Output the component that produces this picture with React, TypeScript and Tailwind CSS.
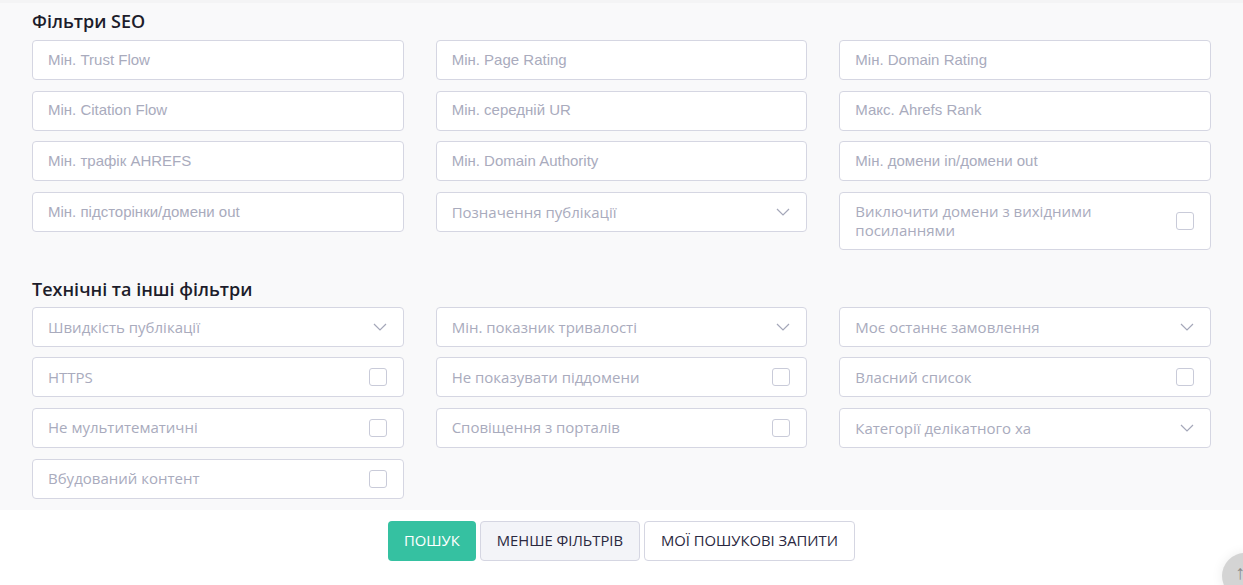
import React from "react";

const OS = "font-['Open_Sans',sans-serif]";
const AR = "font-['Liberation_Sans',Arial,sans-serif]";

function Input({ label }: { label: string }) {
  return (
    <div className={`h-10 rounded-[4px] border border-[#d5d6e2] bg-white flex items-center pl-[15px] text-[15px] text-[#a9abbd] ${AR}`}>
      {label}
    </div>
  );
}

function Chevron() {
  return (
    <svg width="14" height="8" viewBox="0 0 14 8" fill="none" className="shrink-0">
      <path d="M1 1l6 6 6-6" stroke="#a4a7b9" strokeWidth="1.2" />
    </svg>
  );
}

function Select({ label }: { label: string }) {
  return (
    <div className={`h-10 rounded-[4px] border border-[#d5d6e2] bg-white flex items-center justify-between pl-[15px] pr-[16px] text-[15px] text-[#a9abbd] ${OS}`}>
      <span>{label}</span>
      <Chevron />
    </div>
  );
}

function Check({ label, tall }: { label: string; tall?: boolean }) {
  return (
    <div className={`${tall ? "h-[58px]" : "h-10"} rounded-[4px] border border-[#d5d6e2] bg-white flex items-center justify-between pl-[15px] pr-[16px] text-[15px] leading-[19px] text-[#a9abbd] ${OS}`}>
      <span className={tall ? "w-[270px]" : ""}>{label}</span>
      <span className="w-[18px] h-[18px] shrink-0 rounded-[3px] border border-[#c9cbd9] bg-white" />
    </div>
  );
}

export default function App() {
  return (
    <div className="relative w-[1243px] h-[585px] overflow-hidden bg-white">
      <div className="bg-[#f9f9fa] px-8 pb-[11px] border-t-[3px] border-[#f4f4f5]">
        <h2 className={`pt-[6px] mb-[7px] leading-[24px] text-[18px] font-semibold text-[#1d1d2b] ${OS}`}>
          Фільтри SEO
        </h2>
        <div className="grid grid-cols-3 gap-x-8 gap-y-[10.6px] items-start">
          <Input label="Мін. Trust Flow" />
          <Input label="Мін. Page Rating" />
          <Input label="Мін. Domain Rating" />
          <Input label="Мін. Citation Flow" />
          <Input label="Мін. середній UR" />
          <Input label="Макс. Ahrefs Rank" />
          <Input label="Мін. трафік AHREFS" />
          <Input label="Мін. Domain Authority" />
          <Input label="Мін. домени in/домени out" />
          <Input label="Мін. підсторінки/домени out" />
          <Select label="Позначення публікації" />
          <Check label="Виключити домени з вихідними посиланнями" tall />
        </div>
        <h2 className={`mt-[27px] mb-[6px] leading-[24px] text-[18px] font-semibold text-[#1d1d2b] ${OS}`}>
          Технічні та інші фільтри
        </h2>
        <div className="grid grid-cols-3 gap-x-8 gap-y-[10.6px] items-start">
          <Select label="Швидкість публікації" />
          <Select label="Мін. показник тривалості" />
          <Select label="Моє останнє замовлення" />
          <Check label="HTTPS" />
          <Check label="Не показувати піддомени" />
          <Check label="Власний список" />
          <Check label="Не мультитематичні" />
          <Check label="Сповіщення з порталів" />
          <Select label="Категорії делікатного ха" />
          <Check label="Вбудований контент" />
        </div>
      </div>
      <div className={`flex justify-center gap-[4px] pt-[11px] ${OS}`}>
        <button className="h-10 px-4 rounded-[4px] bg-[#35c1a1] text-white text-[14.8px]">ПОШУК</button>
        <button className="h-10 px-4 rounded-[4px] bg-[#f3f4f8] border border-[#d5d6e2] text-[#2a2840] text-[14.8px]">МЕНШЕ ФІЛЬТРІВ</button>
        <button className="h-10 px-4 rounded-[4px] bg-white border border-[#d5d6e2] text-[#2a2840] text-[14.8px]">МОЇ ПОШУКОВІ ЗАПИТИ</button>
      </div>
      <div className="absolute left-[1222px] top-[553px] w-[46px] h-[46px] rounded-full bg-[#d4d4d4] shadow-[0_0_12px_rgba(0,0,0,0.08)] flex items-start justify-center pt-[9px] pr-[10px] text-[#8c8c8c] text-[20px] leading-none font-['Liberation_Sans',sans-serif]">
        ↑
      </div>
    </div>
  );
}
